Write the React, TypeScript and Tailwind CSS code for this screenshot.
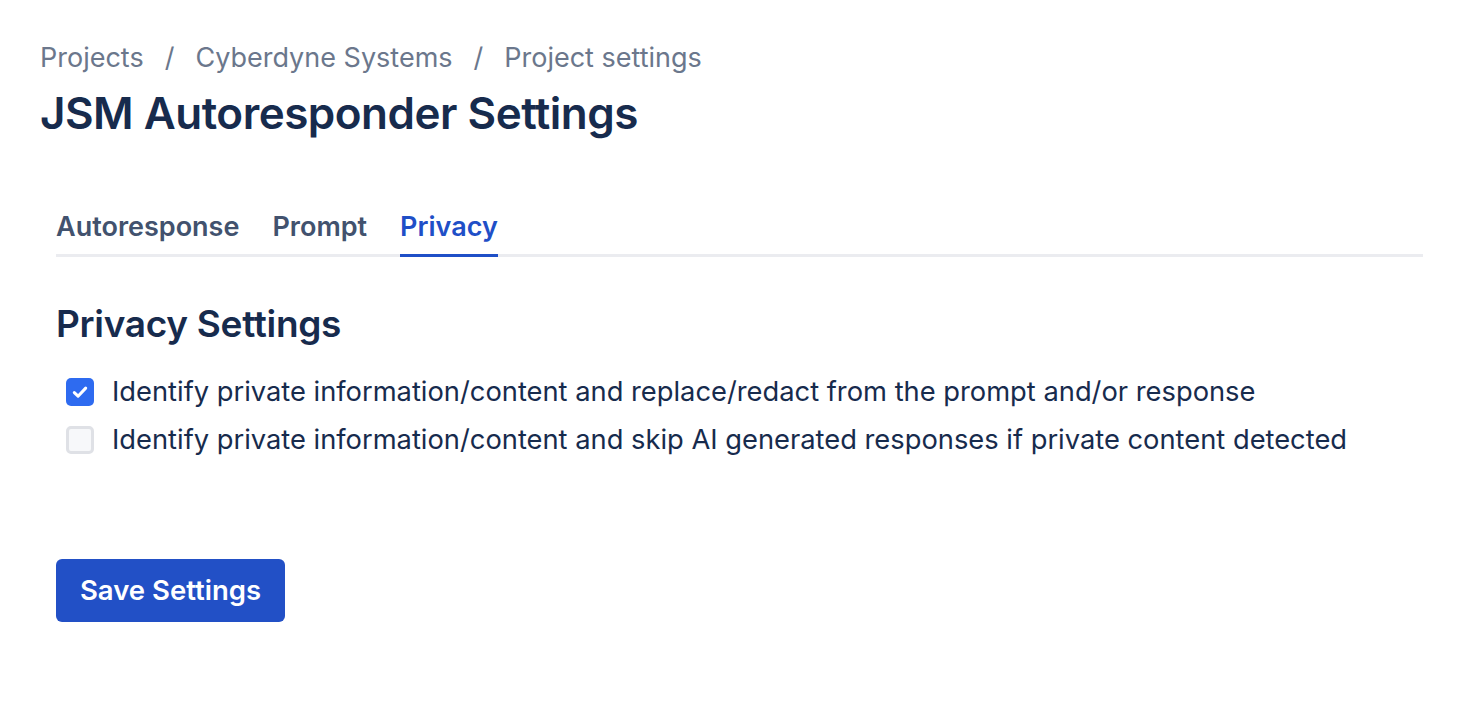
import React, { useState } from "react";

const TABS = ["Autoresponse", "Prompt", "Privacy"];

const OPTIONS = [
  "Identify private information/content and replace/redact from the prompt and/or response",
  "Identify private information/content and skip AI generated responses if private content detected",
];

function Check({ on }: { on: boolean }) {
  return on ? (
    <span className="flex h-[28px] w-[28px] items-center justify-center rounded-[5px] bg-[#2e6bf0]">
      <svg viewBox="0 0 16 16" className="h-[24px] w-[24px]" fill="none">
        <path d="M4.2 8.4l2.5 2.4 5.1-5.4" stroke="white" strokeWidth="2" strokeLinecap="round" strokeLinejoin="round" />
      </svg>
    </span>
  ) : (
    <span className="block h-[28px] w-[28px] rounded-[5px] border-[3px] border-[#dfe1e6] bg-[#f7f8fa]" />
  );
}

export default function App() {
  const [checked, setChecked] = useState([true, false]);
  return (
    <div className="min-h-screen bg-white pl-[40px] pr-[49px] pt-[39px] font-['Inter',sans-serif] text-[#172b4d]">
      {/* breadcrumb */}
      <nav className="flex items-center text-[27px] leading-[38px] text-[#6b778c]">
        <span>Projects</span>
        <span className="px-[21px]">/</span>
        <span>Cyberdyne Systems</span>
        <span className="px-[21px]">/</span>
        <span>Project settings</span>
      </nav>
      <h1 className="mt-[8px] text-[44px] font-semibold leading-[56px] tracking-[-0.5px] text-[#172b4d]">
        JSM Autoresponder Settings
      </h1>

      <div className="pl-[16px]">
        {/* tabs */}
        <div className="mt-[68px] flex gap-[33px] border-b-[3px] border-[#ebecf0]">
          {TABS.map((t) => (
            <div
              key={t}
              className={
                t === "Privacy"
                  ? "-mb-[3px] border-b-[3px] border-[#1f4fc7] pb-[6px] text-[27px] font-semibold leading-[36px] text-[#1f4fc7]"
                  : "pb-[9px] text-[27px] font-semibold leading-[36px] text-[#42526e]"
              }
            >
              {t}
            </div>
          ))}
        </div>

        <h2 className="mt-[42px] text-[37px] font-semibold leading-[50px] tracking-[-0.3px] text-[#172b4d]">
          Privacy Settings
        </h2>

        <div className="mt-[26px] flex flex-col gap-[14px] pl-[10px]">
          {OPTIONS.map((o, i) => (
            <label
              key={o}
              className="flex cursor-pointer items-center gap-[18px] text-[27.3px] leading-[34px] text-[#172b4d]"
              onClick={() => setChecked((c) => c.map((v, j) => (j === i ? !v : v)))}
            >
              <Check on={checked[i]} />
              <span>{o}</span>
            </label>
          ))}
        </div>

        <button className="mt-[102px] h-[63px] w-[229px] rounded-[6px] bg-[#2250c6] text-[27.5px] font-semibold text-white">
          Save Settings
        </button>
      </div>
    </div>
  );
}
